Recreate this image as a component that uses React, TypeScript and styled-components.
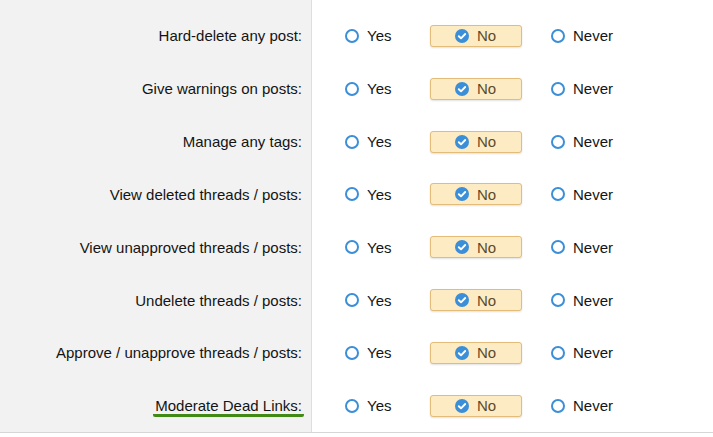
import styled, { createGlobalStyle } from "styled-components";

const GlobalStyle = createGlobalStyle`
  body {
    margin: 0;
    background: #fff;
    font-family: "Liberation Sans", Arial, sans-serif;
  }
`;

const Form = styled.div`
  display: flex;
  flex-direction: column;
  border-bottom: 1px solid #d6d6d6;
`;

const Row = styled.div`
  display: grid;
  grid-template-columns: 312px 1fr;
  height: 52.85px;
  &:first-child {
    height: 62.35px;
  }
  &:first-child > * {
    padding-top: 9.5px;
  }
`;

const LabelCell = styled.div`
  background: #f2f2f2;
  border-right: 1px solid #dedede;
  display: flex;
  align-items: center;
  justify-content: flex-end;
  padding-right: 9px;
  font-size: 15px;
  color: #141414;
`;

const Highlight = styled.span`
  border-bottom: 3px solid #428a16;
  border-radius: 2px;
  padding: 0 2px 0 2px;
  margin: 3px -2px 0 0;
`;

const ValueCell = styled.div`
  display: flex;
  align-items: center;
  padding-left: 8px;
`;

const OptionGroup = styled.div`
  display: grid;
  grid-template-columns: 110px 96px auto;
  align-items: center;
`;

const Option = styled.label<{ $selected?: boolean }>`
  display: inline-flex;
  align-items: center;
  gap: 8px;
  height: 22px;
  width: ${(p) => (p.$selected ? "92px" : "auto")};
  box-sizing: border-box;
  padding-left: 24px;
  border: 1px solid ${(p) => (p.$selected ? "#e2bc78" : "transparent")};
  border-radius: 3px;
  background: ${(p) => (p.$selected ? "#fdecc3" : "transparent")};
  box-shadow: ${(p) => (p.$selected ? "0 1px 2px rgba(0,0,0,0.12)" : "none")};
  font-size: 15px;
  color: ${(p) => (p.$selected ? "#5b4a2c" : "#141414")};
`;

const RadioRing = styled.span`
  width: 14px;
  height: 14px;
  box-sizing: border-box;
  border: 2.5px solid #3b8ed8;
  border-radius: 50%;
  background: #fff;
  flex-shrink: 0;
`;

const CheckedIcon = () => (
  <svg width="14" height="14" viewBox="0 0 14 14">
    <circle cx="7" cy="7" r="7" fill="#3b8ed8" />
    <path
      d="M3.8 7.2 L6 9.3 L10.2 5"
      fill="none"
      stroke="#fff"
      strokeWidth="1.9"
      strokeLinecap="round"
      strokeLinejoin="round"
    />
  </svg>
);

const permissions = [
  "Hard-delete any post:",
  "Give warnings on posts:",
  "Manage any tags:",
  "View deleted threads / posts:",
  "View unapproved threads / posts:",
  "Undelete threads / posts:",
  "Approve / unapprove threads / posts:",
  "Moderate Dead Links:",
];

const choices = ["Yes", "No", "Never"];

export default function App() {
  return (
    <>
      <GlobalStyle />
      <Form>
        {permissions.map((label, i) => (
          <Row key={label}>
            <LabelCell>
              {i === permissions.length - 1 ? (
                <Highlight>{label}</Highlight>
              ) : (
                label
              )}
            </LabelCell>
            <ValueCell>
              <OptionGroup>
                {choices.map((c) => {
                  const selected = c === "No";
                  return (
                    <div key={c}>
                      <Option $selected={selected}>
                        {selected ? <CheckedIcon /> : <RadioRing />}
                        {c}
                      </Option>
                    </div>
                  );
                })}
              </OptionGroup>
            </ValueCell>
          </Row>
        ))}
      </Form>
    </>
  );
}
